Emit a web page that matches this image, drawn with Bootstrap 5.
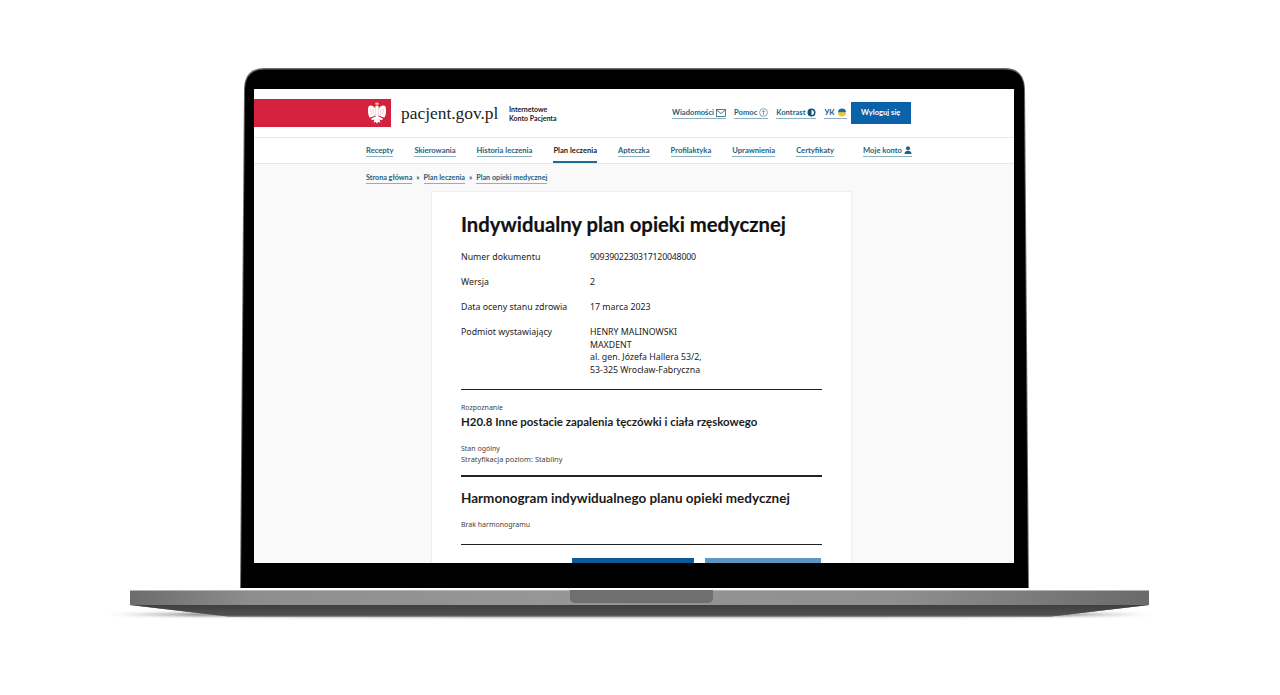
<!DOCTYPE html>
<html lang="pl">
<head>
    <meta charset="UTF-8">
    <meta name="viewport" content="width=device-width, initial-scale=1.0">
    <title>Indywidualny plan opieki medycznej</title>
    <link href="https://cdn.jsdelivr.net/npm/bootstrap@5.3.0/dist/css/bootstrap.min.css" rel="stylesheet">
    <style>
        html { height: 695px; overflow: hidden; background: #fff; }
        body { height: 695px; overflow: hidden; background: transparent; font-family: "Noto Sans", "Open Sans", sans-serif; color: #1b1b1b; }

        /* laptop */
        .stage { padding: 68px 0 0 130px; position: relative; }
        .lid-wrap { width: 789px; height: 520px; margin: 0 0 2px 110px; background: #6d6d6d;
            clip-path: path("M0 522 L4 20 Q5 0 24 0 L765 0 Q784 0 785 20 L789 522 Z"); }
        .lid { height: 520px; background: #000; padding: 21px 15px 0 14px;
            clip-path: path("M1 522 L5 20 Q6 1.5 24 1.5 L765 1.5 Q783 1.5 784 20 L788 522 Z"); }
        .screen { width: 760px; height: 474px; background: #f9f9f9; overflow: hidden; }
        .base { width: 1019px; height: 27px; background: linear-gradient(#b5b5b5 0 1px, transparent 1px),
                linear-gradient(90deg, #6c6c6c, #8e8e8e 12%, #969696 40%, #8f8f8f 75%, #6a6a6a);
            clip-path: polygon(0 0, 100% 0, 100% 15px, 90% 27px, 10% 27px, 0 15px); position: relative; }
        .base-lower { height: 12px; top: 15px; background: linear-gradient(#3f3f3f, #505050 85%, #9a9a9a); }
        .notch { width: 143px; height: 13px; margin-left: 440px; background: #6f6f6f; border-radius: 0 0 5px 5px; }
        .shadow-strip { width: 1050px; height: 5px; margin: -5px 0 0 -26px; border-radius: 50%;
            background: linear-gradient(90deg, transparent, #777 9%, #777 91%, transparent); filter: blur(1.5px); position: relative; z-index: -1; }

        /* header */
        .top-head { height: 49px; background: #fff; border-bottom: 1px solid #e6e6e6; padding-top: 10px; }
        .red-band { width: 137px; height: 28px; background: #d4213d; padding-right: 3px; }
        .logo-name { font-family: "Liberation Serif", serif; font-size: 17.4px; color: #222; margin-left: 10px; line-height: 28px; width: 98px; white-space: nowrap; }
        .logo-sub { font-family: Lato, sans-serif; font-weight: 700; font-size: 7px; line-height: 9px; margin: 6px 0 0 10px; color: #222; width: 153px; }
        .util-links { font-family: Lato, sans-serif; font-size: 7.6px; font-weight: 700; margin-top: 3px; height: 22px; }
        .lnk { color: #255f80; text-decoration: none; border-bottom: 1px solid #8fb0c2; line-height: 11px; white-space: nowrap; display: inline-flex; align-items: center; gap: 2px; }
        .logout { background: #0b62a8; color: #fff; font-size: 7.6px; font-weight: 700; width: 60px; height: 22px; border-radius: 0; border: 0; padding: 0; }
        .main-nav { height: 26px; background: #fff; border-bottom: 1px solid #e6e6e6; padding-left: 112px; font-family: Lato, sans-serif; font-size: 7.6px; font-weight: 700; }
        .main-nav .lnk { margin-top: 7px; align-self: flex-start; }
        .nav-cell { margin-right: 21px; height: 25px; }
        .nav-cell.on { border-bottom: 2px solid #1d6d8f; }
        .nav-cell.on .lnk { color: #222; border-bottom-color: transparent; }
        .crumbs { padding: 9px 0 0 112px; font-family: Lato, sans-serif; font-size: 7.2px; font-weight: 700; height: 27px; color: #255f80; }
        .crumbs .lnk { line-height: 10px; }

        /* card */
        .doc-card { width: 421px; margin-left: 177px; height: 400px; background: #fff; border: 1px solid #efefef; padding: 19px 29px 0 29px; }
        .doc-title { font-family: Lato, sans-serif; font-size: 20.3px; font-weight: 700; line-height: 27px; margin: 0 0 13px; color: #111; white-space: nowrap; -webkit-text-stroke: .2px #111; }
        .info-row { font-size: 8.8px; line-height: 12.6px; margin-bottom: 12.4px; color: #222; }
        .info-key { width: 129px; }
        .doc-no { letter-spacing: -.22px; }
        .rule { height: 1.5px; background: #222; opacity: 1; margin: 0; border: 0; }
        .tiny { font-size: 7px; line-height: 10px; color: #444; }
        .tiny-wide { font-size: 7.4px; }
        .diag { font-family: Lato, sans-serif; font-size: 11.45px; font-weight: 700; line-height: 15px; margin: 1px 0 0; color: #1b1b1b; white-space: nowrap; }
        .sched { font-family: Lato, sans-serif; font-size: 13.5px; font-weight: 700; line-height: 18px; margin: 0; color: #1b1b1b; white-space: nowrap; }
        .act-a, .act-b { height: 30px; border: 0; border-radius: 0; padding: 0; }
        .act-a { width: 122px; background: #0b5a9a; margin-left: 111px; }
        .act-b { width: 116px; background: #5f95c5; margin-left: 11px; }
    </style>
</head>
<body>
<div class="stage">
    <div class="lid-wrap">
        <div class="lid">
            <div class="screen">
                <div class="top-head d-flex">
                    <div class="red-band d-flex flex-shrink-0 align-items-center justify-content-end">
                        <svg width="22" height="24" viewBox="0 0 22 24">
                            <g fill="#fff">
                                <path d="M2.500 5.500C4 3.800 7 4.200 9.500 7.500V14C7.500 15.500 5 16.500 3.500 16.500 1.800 13.500 1.500 9 2.500 5.500z"/>
                                <path d="M19.500 5.500C18 3.800 15 4.200 12.500 7.500V14c2 1.500 4.500 2.500 6 2.500 1.700-3 2-7.500 1-11z"/>
                                <path d="M11 4.500c1.300 0 2 .9 1.700 2.300L12.600 15 11 17.500 9.400 15 9.300 6.800C9 5.400 9.700 4.500 11 4.500z"/>
                                <path d="M9 15.500l-4 2.300 1 1.500 2.600-.8L7.500 21.800l2-1 1.500 1.700 1.500-1.700 2 1-1.100-3.300 2.600.8 1-1.500-4-2.300z"/>
                            </g>
                            <path d="M4.500 7.500l.7 6M7 8l.3 5.500M17.500 7.500l-.7 6M15 8l-.3 5.500" stroke="#e89aa6" stroke-width=".5"/>
                            <path d="M9.500 3.700h3l.6-2.300-1.100.8-1-1.200-1 1.200-1.100-.8z" fill="#f2cf63"/>
                            <path d="M12.500 7l1.600.5" stroke="#f2cf63" stroke-width=".8"/>
                        </svg>
                    </div>
                    <div class="logo-name flex-shrink-0">pacjent.gov.pl</div>
                    <div class="logo-sub flex-shrink-0" style="width:163px">Internetowe<br>Konto Pacjenta</div>
                    <div class="util-links d-flex align-items-center">
                        <a class="lnk" href="#">Wiadomości
                            <svg width="10" height="8" viewBox="0 0 10 8" fill="none" stroke="#255f80" stroke-width=".8"><rect x=".5" y=".5" width="9" height="7"/><path d="M.5 1l4.500 3.500L9.500 1"/></svg>
                        </a>
                        <a class="lnk ms-2" href="#">Pomoc
                            <svg width="9" height="9" viewBox="0 0 9 9" fill="none" stroke="#4d7f9c" stroke-width=".7"><circle cx="4.500" cy="4.500" r="3.900"/><path d="M4.500 7V2.500M3 4l1.500-1.500L6 4"/></svg>
                        </a>
                        <a class="lnk ms-2" href="#">Kontrast
                            <svg width="9" height="9" viewBox="0 0 9 9"><circle cx="4.500" cy="4.500" r="4" fill="#17506f"/><path d="M4.500 2a2.500 2.500 0 0 1 0 5z" fill="#fff"/></svg>
                        </a>
                        <a class="lnk ms-2" href="#">УК
                            <svg width="10" height="9" viewBox="0 0 10 9"><path d="M1 4.500a4 4 0 0 1 8 0z" fill="#1d6aa8"/><path d="M1 4.500h8a4 4 0 0 1-8 0z" fill="#f2c81e"/></svg>
                        </a>
                        <button class="btn logout ms-1" type="button">Wyloguj się</button>
                    </div>
                </div>
                <nav class="main-nav d-flex">
                    <div class="nav-cell d-flex"><a class="lnk" href="#">Recepty</a></div>
                    <div class="nav-cell d-flex"><a class="lnk" href="#">Skierowania</a></div>
                    <div class="nav-cell d-flex"><a class="lnk" href="#">Historia leczenia</a></div>
                    <div class="nav-cell on d-flex"><a class="lnk" href="#">Plan leczenia</a></div>
                    <div class="nav-cell d-flex"><a class="lnk" href="#">Apteczka</a></div>
                    <div class="nav-cell d-flex"><a class="lnk" href="#">Profilaktyka</a></div>
                    <div class="nav-cell d-flex"><a class="lnk" href="#">Uprawnienia</a></div>
                    <div class="nav-cell d-flex"><a class="lnk" href="#">Certyfikaty</a></div>
                    <div class="nav-cell d-flex ms-2"><a class="lnk" href="#">Moje konto
                        <svg width="8" height="9" viewBox="0 0 8 9" fill="#255f80"><circle cx="4" cy="2.300" r="2"/><path d="M.5 8c0-2.500 1.500-3.200 3.500-3.200S7.500 5.500 7.500 8z"/></svg>
                    </a></div>
                </nav>
                <div class="crumbs d-flex">
                    <a class="lnk align-self-start" href="#">Strona główna</a><span class="mx-1 px-0">»</span>
                    <a class="lnk align-self-start" href="#">Plan leczenia</a><span class="mx-1 px-0">»</span>
                    <a class="lnk align-self-start" href="#">Plan opieki medycznej</a>
                </div>
                <main class="doc-card">
                    <h1 class="doc-title">Indywidualny plan opieki medycznej</h1>
                    <div class="info-row d-flex"><div class="info-key">Numer dokumentu</div><div class="doc-no">9093902230317120048000</div></div>
                    <div class="info-row d-flex"><div class="info-key">Wersja</div><div>2</div></div>
                    <div class="info-row d-flex"><div class="info-key">Data oceny stanu zdrowia</div><div>17 marca 2023</div></div>
                    <div class="info-row d-flex"><div class="info-key">Podmiot wystawiający</div><div>HENRY MALINOWSKI<br>MAXDENT<br>al. gen. Józefa Hallera 53/2,<br>53-325 Wrocław-Fabryczna</div></div>
                    <hr class="rule">
                    <div class="tiny" style="margin-top:13px">Rozpoznanie</div>
                    <h2 class="diag">H20.8 Inne postacie zapalenia tęczówki i ciała rzęskowego</h2>
                    <div class="tiny" style="margin-top:15px">Stan ogólny<br><span class="tiny-wide">Stratyfikacja poziom: Stabilny</span></div>
                    <hr class="rule" style="margin-top:10px">
                    <h2 class="sched" style="margin-top:12px">Harmonogram indywidualnego planu opieki medycznej</h2>
                    <div class="tiny" style="margin-top:13px">Brak harmonogramu</div>
                    <hr class="rule" style="margin-top:14px">
                    <div class="d-flex" style="margin-top:13px">
                        <button class="btn act-a" type="button"></button>
                        <button class="btn act-b" type="button"></button>
                    </div>
                </main>
            </div>
        </div>
    </div>
    <div class="base">
        <div class="base-lower position-absolute start-0 end-0"></div>
        <div class="notch position-relative"></div>
    </div>
    <div class="shadow-strip"></div>
</div>
<script src="https://cdn.jsdelivr.net/npm/bootstrap@5.3.0/dist/js/bootstrap.bundle.min.js"></script>
</body>
</html>
